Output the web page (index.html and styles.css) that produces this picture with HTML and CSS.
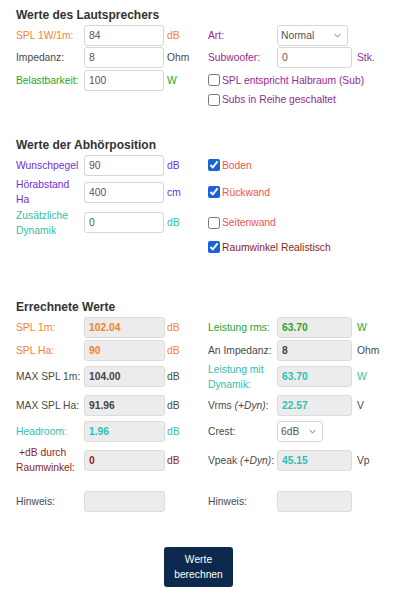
FILE: index.html
```html
<!DOCTYPE html>
<html lang="de">

<head>
  <meta charset="UTF-8">
  <meta name="viewport" content="width=device-width, initial-scale=1.0">
  <title>Lautsprecher Rechner</title>
  <link rel="stylesheet" href="styles.css">
</head>

<body>
  <div class="page">

    <section class="block block-speaker">
      <h2 class="title">Werte des Lautsprechers</h2>
      <div class="grid grid-speaker">
        <label class="lbl c-orange">SPL 1W/1m:</label>
        <input class="field" value="84">
        <span class="unit c-orange">dB</span>
        <label class="lbl c-purple">Art:</label>
        <div class="select sel-art">
          <select><option>Normal</option></select>
          <svg viewBox="0 0 10 6"><path d="M1 1l4 4 4-4" /></svg>
        </div>
        <span></span>

        <label class="lbl">Impedanz:</label>
        <input class="field" value="8">
        <span class="unit">Ohm</span>
        <label class="lbl c-purple">Subwoofer:</label>
        <input class="field field-r" value="0">
        <span class="unit unit-r c-purple">Stk.</span>

        <label class="lbl c-green">Belastbarkeit:</label>
        <input class="field" value="100">
        <span class="unit c-green">W</span>
        <label class="check c-purple"><input type="checkbox"> SPL entspricht Halbraum (Sub)</label>

        <label class="check c-purple"><input type="checkbox"> Subs in Reihe geschaltet</label>
      </div>
    </section>

    <section class="block block-position">
      <h2 class="title">Werte der Abhörposition</h2>
      <div class="grid grid-position">
        <label class="lbl c-violet">Wunschpegel</label>
        <input class="field" value="90">
        <span class="unit c-violet">dB</span>
        <label class="check c-red"><input type="checkbox" checked> Boden</label>

        <label class="lbl c-violet">Hörabstand Ha</label>
        <input class="field" value="400">
        <span class="unit c-violet">cm</span>
        <label class="check c-red"><input type="checkbox" checked> Rückwand</label>

        <label class="lbl c-teal">Zusätzliche Dynamik</label>
        <input class="field" value="0">
        <span class="unit c-teal">dB</span>
        <label class="check c-red"><input type="checkbox"> Seitenwand</label>

        <label class="check c-darkred"><input type="checkbox" checked> Raumwinkel Realistisch</label>
      </div>
    </section>

    <section class="block block-result">
      <h2 class="title">Errechnete Werte</h2>
      <div class="grid grid-result">
        <label class="lbl c-orange">SPL 1m:</label>
        <input class="field out c-orange" value="102.04" readonly>
        <span class="unit c-orange">dB</span>
        <label class="lbl c-green">Leistung rms:</label>
        <input class="field field-r out c-green" value="63.70" readonly>
        <span class="unit unit-r c-green">W</span>

        <label class="lbl c-orange">SPL Ha:</label>
        <input class="field out c-orange" value="90" readonly>
        <span class="unit c-orange">dB</span>
        <label class="lbl">An Impedanz:</label>
        <input class="field field-r out" value="8" readonly>
        <span class="unit unit-r">Ohm</span>

        <label class="lbl">MAX SPL 1m:</label>
        <input class="field out" value="104.00" readonly>
        <span class="unit">dB</span>
        <label class="lbl c-teal">Leistung mit Dynamik:</label>
        <input class="field field-r out c-teal" value="63.70" readonly>
        <span class="unit unit-r c-teal">W</span>

        <label class="lbl">MAX SPL Ha:</label>
        <input class="field out" value="91.96" readonly>
        <span class="unit">dB</span>
        <label class="lbl">Vrms <i>(+Dyn)</i>:</label>
        <input class="field field-r out c-teal" value="22.57" readonly>
        <span class="unit unit-r">V</span>

        <label class="lbl c-teal">Headroom:</label>
        <input class="field out c-teal" value="1.96" readonly>
        <span class="unit c-teal">dB</span>
        <label class="lbl">Crest:</label>
        <div class="select sel-crest">
          <select><option>6dB</option></select>
          <svg viewBox="0 0 10 6"><path d="M1 1l4 4 4-4" /></svg>
        </div>
        <span></span>

        <label class="lbl lbl-indent c-darkred">+dB durch Raumwinkel:</label>
        <input class="field out c-darkred" value="0" readonly>
        <span class="unit c-darkred">dB</span>
        <label class="lbl">Vpeak <i>(+Dyn)</i>:</label>
        <input class="field field-r out c-teal" value="45.15" readonly>
        <span class="unit unit-r">Vp</span>

        <label class="lbl">Hinweis:</label>
        <input class="field out" value="" readonly>
        <span></span>
        <label class="lbl">Hinweis:</label>
        <input class="field field-r out" value="" readonly>
        <span></span>
      </div>
    </section>

    <div class="actions">
      <button class="btn" type="button">Werte berechnen</button>
    </div>

  </div>
</body>

</html>
```

FILE: styles.css
```css
body {
  margin: 0;
  background: #fff;
  font-family: "Liberation Sans", Arial, sans-serif;
  font-size: 10.3px;
  line-height: 15px;
  color: #4a4a4a;
}

.page {
  padding: 6px 0 0 16px;
  width: 381px;
}

.title {
  margin: 0;
  font-size: 12px;
  line-height: 18px;
  font-weight: bold;
  color: #333;
}

.block-position {
  margin-top: 28px;
}

.block-result {
  margin-top: 41px;
}

.grid {
  display: grid;
  grid-template-columns: 68px 80px 44px 69px 75px 1fr;
  align-items: center;
}

.grid-speaker {
  grid-template-rows: 22px 23px 22px 17px;
}

.grid-position {
  grid-template-rows: 22px 32px 29px 20px;
}

.grid-result {
  grid-template-rows: 23px 23px 29px 29px 23px 34px 49px;
}

.lbl {
  display: block;
}

.lbl i {
  font-style: italic;
}

.lbl-indent {
  text-indent: 3px;
}

.field {
  box-sizing: border-box;
  width: 80px;
  height: 21px;
  margin: 0;
  padding: 0 4px;
  border: 1px solid #d6d6d6;
  border-radius: 3px;
  background: #fff;
  font-family: inherit;
  font-size: 10.3px;
  color: #555;
  outline: none;
}

.field-r {
  width: 75px;
}

.out {
  width: 81px;
  background: #ececec;
  border-color: #dcdcdc;
  font-weight: bold;
  color: #444;
}

.out.field-r {
  width: 75px;
}

.unit {
  padding-left: 3px;
}

.unit-r {
  padding-left: 5px;
}

.select {
  position: relative;
  height: 21px;
}

.select select {
  box-sizing: border-box;
  width: 100%;
  height: 21px;
  margin: 0;
  padding: 0 0 0 3px;
  border: 1px solid #d6d6d6;
  border-radius: 3px;
  background: #fff;
  font-family: inherit;
  font-size: 10.3px;
  color: #555;
  -webkit-appearance: none;
  appearance: none;
  outline: none;
}

.select svg {
  position: absolute;
  right: 7px;
  top: 8px;
  width: 7px;
  height: 5px;
  fill: none;
  stroke: #666;
  stroke-width: 1.4;
  pointer-events: none;
}

.sel-art {
  width: 71px;
}

.sel-crest {
  width: 46px;
}

.check {
  grid-column: 4 / -1;
  display: flex;
  align-items: center;
  gap: 2px;
  white-space: nowrap;
}

.check input {
  width: 12px;
  height: 12px;
  margin: 0;
  accent-color: #1a63d6;
}

.actions {
  display: flex;
  justify-content: center;
  margin-top: 21px;
  padding-right: 16px;
}

.btn {
  width: 69px;
  height: 40px;
  padding: 0 6px;
  border: none;
  border-radius: 3px;
  background: #0d2a4e;
  color: #fff;
  font-family: inherit;
  font-size: 10.3px;
  line-height: 15px;
}

.c-orange { color: #f7812d; }
.c-green { color: #2aa52a; }
.c-purple { color: #922b91; }
.c-violet { color: #6f2fd3; }
.c-teal { color: #2fc0b0; }
.c-red { color: #ef5350; }
.c-darkred { color: #8b1f1f; }
```
